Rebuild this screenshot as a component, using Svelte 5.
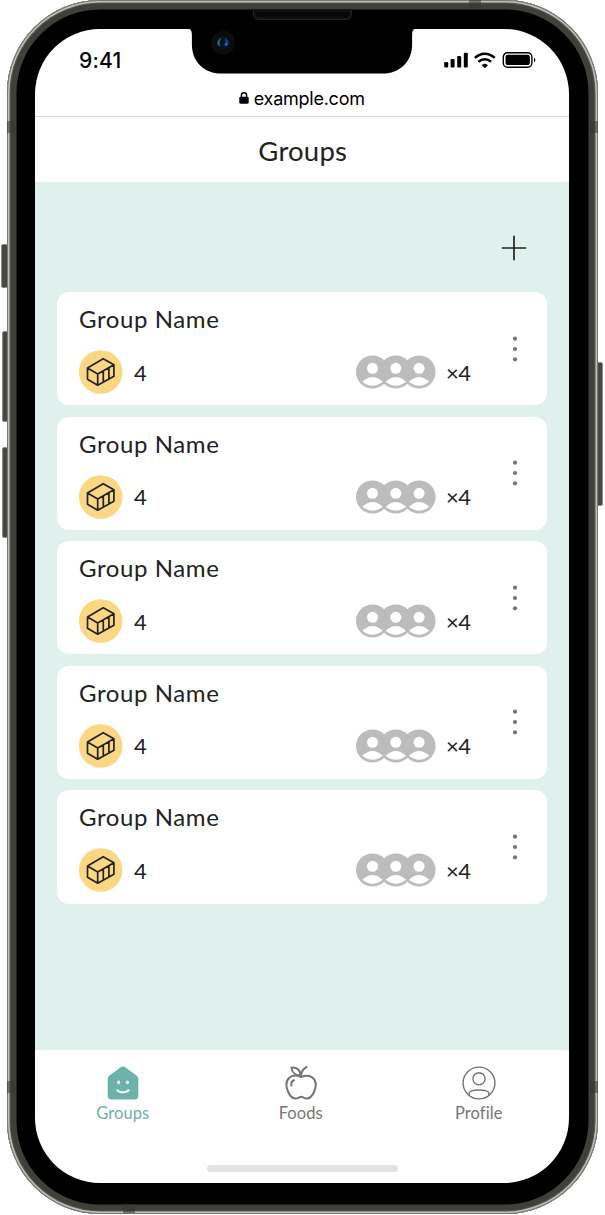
<script>
  const groups = Array.from({ length: 5 }, (_, id) => ({ id, name: 'Group Name', boxes: 4, members: 4 }));
  const people = [16.5, 39.8, 63.1];
</script>

<div class="stage">
  <i class="key mute"></i><i class="key up"></i><i class="key down"></i><i class="key power"></i>
  <div class="phone">
    <i class="band t"></i><i class="band l1"></i><i class="band r1"></i>
    <i class="band l2"></i><i class="band r2"></i><i class="band b"></i>
    <i class="speaker"></i>
    <div class="screen">
      <header class="status">
        <span class="time">9:41</span>
        <svg class="signals" width="95" height="18" viewBox="0 0 95 18">
          <g fill="#000">
            <rect x="1.2" y="11" width="4" height="5.5" rx="1.2" />
            <rect x="7.6" y="8" width="4" height="8.5" rx="1.2" />
            <rect x="14.2" y="5" width="4" height="11.5" rx="1.2" />
            <rect x="20.8" y="1.7" width="4" height="14.8" rx="1.2" />
            <path d="M41.8 17l-2.8-2.8q2.800-2.200 5.600 0z" stroke="#000" stroke-width=".6" />
          </g>
          <g fill="none" stroke="#000" stroke-width="2.5">
            <path d="M31.900 6.900q4.400-4.200 9.900-4.200t9.900 4.200" />
            <path d="M35.500 10.700q2.800-2.500 6.300-2.500t6.300 2.500" />
          </g>
          <rect x="60.300" y="1.700" width="28.600" height="14.600" rx="4.200" fill="none" stroke="#000" stroke-width="1.400" />
          <rect x="62.500" y="3.800" width="24.400" height="10.300" rx="2" />
          <path d="M91 6.600q2.800 2.400 0 4.800z" />
        </svg>
      </header>
      <svg class="notch" width="230" height="46" viewBox="0 0 230 46">
        <path d="M0 0H230V.6C226 .8 225.200 2.500 225.100 7V17C225 34 212 45.600 196 45.600H34C18 45.600 5 34 4.900 17V7C4.800 2.500 4 .8 0 .6Z" />
        <circle cx="36" cy="14.800" r="12" fill="#0b0c0d" />
        <circle cx="36" cy="14.800" r="6.400" fill="#081326" />
        <path d="M34.500 9.800q-5 2-4 7l3 2q-2-5 1-9z" fill="#2b6a6d" />
        <path d="M37.500 9.800q5 2 4 7l-4 2q2-5 0-9z" fill="#193b91" />
        <circle cx="39" cy="16.300" r="1.300" fill="#4960a8" />
      </svg>
      <div class="address">
        <svg width="10" height="12" viewBox="0 0 10 12"><rect x=".3" y="4.800" width="9.400" height="7" rx="1.400" /><path d="M2.400 5.500V3.400a2.600 2.600 0 0 1 5.200 0v2.100" fill="none" stroke="#000" stroke-width="1.400" /></svg>
        <span>example.com</span>
      </div>
      <h1>Groups</h1>
      <main>
        <button class="add" aria-label="Add group">
          <svg width="26" height="26" viewBox="0 0 26 26"><path d="M13 .8v24.400M.8 13h24.400" stroke="#222" stroke-width="1.700" /></svg>
        </button>
        <div class="list">
          {#each groups as group (group.id)}
            <article>
              <div class="info">
                <h2>{group.name}</h2>
                <div class="row">
                  <svg width="44" height="44" viewBox="0 0 44 44">
                    <circle cx="21.700" cy="22" r="21.800" fill="#fcd783" />
                    <path d="M8.500 18 24.200 8.700 34.900 14.800 18.700 23.900ZM8.500 18V29.300L18.700 35.200V23.900M18.700 35.200 34.900 26.200V14.800M24.300 20.900V32M29.900 17.700V29" fill="none" stroke="#222" stroke-width="1.700" stroke-linejoin="round" />
                  </svg>
                  <span class="boxes">{group.boxes}</span>
                  <svg class="people" width="80" height="34" viewBox="0 0 80 34">
                    {#each people as x}
                      <circle cx={x} cy="17" r="16.500" fill="#bcbcbc" />
                    {/each}
                    {#each people as x}
                      <circle cx={x} cy="13.300" r="5.500" fill="#fff" />
                      <path d="M{x - 10.200} 26.700Q{x} 17.300 {x + 10.200} 26.700Q{x} 34.800 {x - 10.200} 26.700Z" fill="#fff" />
                    {/each}
                  </svg>
                  <span class="members">×{group.members}</span>
                </div>
              </div>
              <svg class="more" width="6" height="26" viewBox="0 0 6 26" fill="#757575"><circle cx="3" cy="2.700" r="2.100" /><circle cx="3" cy="13" r="2.100" /><circle cx="3" cy="23.300" r="2.100" /></svg>
            </article>
          {/each}
        </div>
      </main>
      <nav>
        <div class="tabs">
          <a class="active">
            <svg width="36" height="36" viewBox="0 0 36 36">
              <path d="M15.800 2.200Q18 .6 20.200 2.200L31.500 10.600Q33.300 12 33.300 14V30.800Q33.300 34.400 29.700 34.400H6.300Q2.700 34.400 2.700 30.800V14Q2.700 12 4.500 10.600Z" fill="#6ab2aa" />
              <ellipse cx="13.600" cy="17.300" rx="1.500" ry="1.900" fill="#fff" /><ellipse cx="22.400" cy="17.300" rx="1.500" ry="1.900" fill="#fff" />
              <path d="M12.300 25.300q5.700 4.200 11.400 0" fill="none" stroke="#fff" stroke-width="2.200" stroke-linecap="round" />
            </svg>
            <span>Groups</span>
          </a>
          <a>
            <svg width="36" height="36" viewBox="0 0 36 36" fill="none" stroke="#757575" stroke-width="2" stroke-linecap="round" stroke-linejoin="round">
              <path d="M18 12C14.500 10.500 9.500 9.800 6.300 12.800C2.300 16.500 3.200 22.500 5.200 27C7 31 9.700 33.500 12.800 33.500C15.300 33.500 16.300 31.700 18.200 31.700C20.100 31.700 21.200 33.500 23.600 33.500C27 33.500 29.500 30.500 31.200 26.500C33.200 21.800 33.700 16.200 29.700 12.800C26.500 9.900 21.600 10.500 18 12Z" />
              <path d="M18 11.500C18 7.500 19.500 4.300 23.500 1.900M17.500 10.500C13 10.300 8.800 7.700 8.500 2.700C13.500 1.600 17.700 5.300 17.500 10.500ZM8.400 20.500C8.100 17.800 9 15.800 11 15.200" />
            </svg>
            <span>Foods</span>
          </a>
          <a>
            <svg width="36" height="36" viewBox="0 0 36 36" fill="none" stroke="#757575" stroke-width="1.400">
              <circle cx="18" cy="18" r="15.900" /><circle cx="18" cy="13.800" r="6.100" />
              <path d="M8.400 30.300C6.700 26 11.500 25 18 25S29.300 26 27.600 30.300" stroke-linecap="round" />
            </svg>
            <span>Profile</span>
          </a>
        </div>
        <i class="home"></i>
      </nav>
    </div>
  </div>
</div>

<style>
  :global(body) { background: #fff; overflow: hidden; }
  .stage, .stage * { box-sizing: border-box; }
  .stage { position: relative; width: 605px; height: 1215px; padding: 0 7px; color: #222; font-family: Lato, sans-serif; }
  .phone {
    position: relative; height: 1214px; width: 591px; padding: 29px 29.500px 31px 28px; border-radius: 93px; background: #000;
    box-shadow: inset 0 0 0 1px #777671, inset 0 0 0 2.500px #c0c0ba, inset 0 0 0 3.600px #585752, inset 0 0 0 9.500px #403f3a;
  }
  .screen { position: relative; display: flex; flex-direction: column; height: 1154px; border-radius: 65px; background: #fff; overflow: hidden; }
  .status { height: 62px; display: flex; justify-content: space-between; padding: 18px 28px 0 44px; }
  .time { font: 500 21px/27px Inter, sans-serif; color: #000; letter-spacing: .2px; }
  .signals { margin-top: 4px; margin-right: 3px; }
  .notch { position: absolute; top: -1px; left: 151.800px; }
  .address { height: 26px; display: flex; align-items: flex-start; justify-content: center; gap: 5px; border-bottom: 1px solid #dcdcdc; font: 400 18px/15px Inter, sans-serif; letter-spacing: -.25px; color: #000; }
  .address svg { margin-top: 1px; }
  h1 { margin: 0; height: 65px; padding-left: 2px; font-size: 27.500px; line-height: 68px; font-weight: 400; letter-spacing: .2px; text-align: center; }
  main { height: 868px; padding: 53px 21.500px 0 22px; background: #e0f0ed; display: flex; flex-direction: column; align-items: flex-end; }
  .add { display: flex; border: 0; padding: 0; margin-right: 20px; background: none; }
  .list { width: 490px; display: flex; flex-direction: column; gap: 11.400px; margin-top: 31px; }
  article { height: 113.200px; border-radius: 12px; background: #fff; display: flex; justify-content: space-between; align-items: center; padding: 0 29px 0 22px; }
  .info { width: 394px; height: 100%; padding-top: 11px; }
  h2 { margin: 0; font-size: 24px; line-height: 32px; font-weight: 400; letter-spacing: .6px; }
  .row { display: flex; align-items: center; height: 44px; margin-top: 15px; }
  .boxes { margin-left: 11px; font-size: 22px; }
  .people { margin-left: auto; }
  .members { width: 37px; padding-left: 10px; font-size: 22px; letter-spacing: -.6px; }
  nav { flex: 1; padding-top: 14.500px; display: flex; flex-direction: column; align-items: center; justify-content: space-between; }
  .tabs { width: 100%; display: grid; grid-template-columns: repeat(3, 178px); justify-content: center; padding-right: 2px; }
  .tabs a { display: flex; flex-direction: column; align-items: center; color: #757575; font-size: 16.500px; line-height: 25px; letter-spacing: .1px; }
  .tabs a.active { color: #6ab2aa; }
  .home { width: 191px; height: 7px; border-radius: 4px; background: #e3e3e3; margin: 0 0 11px 2px; }
  .key { position: absolute; background: #484742; border: 1px solid #8b8a85; border-radius: 2px; }
  .mute { left: 1px; top: 244px; width: 7px; height: 44px; }
  .up { left: 2px; top: 331px; width: 6px; height: 91px; }
  .down { left: 2px; top: 447px; width: 6px; height: 91px; }
  .power { left: 596px; top: 362px; width: 7px; height: 144px; }
  .band { position: absolute; background: #353530; opacity: .55; }
  .t { left: 462px; top: 0; width: 12px; height: 8px; }
  .b { left: 116px; bottom: 1px; width: 12px; height: 9px; }
  .l1, .l2 { left: 0; width: 8px; height: 12px; }
  .r1, .r2 { right: 0; width: 8px; height: 12px; }
  .l1, .r1 { top: 121px; }
  .l2, .r2 { top: 1081px; }
  .speaker { position: absolute; left: 246px; top: 9px; width: 99px; height: 11px; border: 1px solid #242424; border-top-color: #171717; border-radius: 2px 2px 6px 6px; background: #080808; box-shadow: inset 0 0 0 2px #101010; }
</style>
